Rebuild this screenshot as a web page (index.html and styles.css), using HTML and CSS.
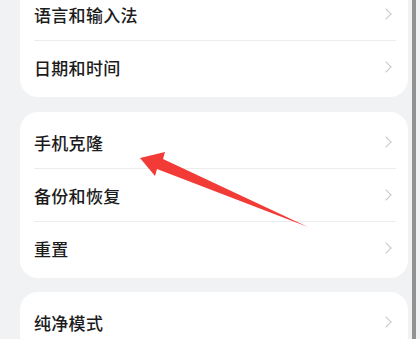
FILE: index.html
```html
<!DOCTYPE html>
<html lang="zh-CN">
<head>
    <meta charset="UTF-8">
    <meta name="viewport" content="width=device-width, initial-scale=1.0">
    <title>系统和更新</title>
    <link rel="stylesheet" href="styles.css">
</head>
<body>
    <div class="page">
        <div class="card card-first">
            <div class="row"><span class="label">语言和输入法</span><span class="chevron"></span></div>
            <div class="row"><span class="label">日期和时间</span><span class="chevron"></span></div>
        </div>

        <div class="card">
            <div class="row"><span class="label">手机克隆</span><span class="chevron"></span></div>
            <div class="row"><span class="label">备份和恢复</span><span class="chevron"></span></div>
            <div class="row"><span class="label">重置</span><span class="chevron"></span></div>
        </div>

        <div class="card">
            <div class="row"><span class="label">纯净模式</span><span class="chevron"></span></div>
        </div>
    </div>

    <!-- annotation arrow drawn over the list -->
    <svg class="arrow" width="420" height="339" viewBox="0 0 420 339">
        <polygon points="140,158 165,152 163,159 308,227 157,169 155,176" fill="#f23a36"/>
    </svg>

    <div class="scrollbar"></div>
</body>
</html>
```

FILE: styles.css
```css
* {
    margin: 0;
    padding: 0;
    box-sizing: border-box;
}

body {
    font-family: "Noto Sans CJK SC", "Noto Sans", sans-serif;
    background-color: #f1f2f4;
    width: 420px;
    height: 339px;
    overflow: hidden;
    position: relative;
}

.page {
    padding: 0 12px 0 20px;
}

.card {
    background-color: #ffffff;
    border-radius: 18px;
    padding: 4px 12px 4px 14px;
    margin-bottom: 14px;
}

.card-first {
    margin-top: -16px;
    margin-bottom: 15px;
}

.row {
    height: 53px;
    display: flex;
    align-items: center;
    justify-content: space-between;
    border-bottom: 1px solid #ececec;
}

.row:last-child {
    height: 52px;
    border-bottom: none;
}

.label {
    font-size: 17px;
    font-weight: 500;
    color: #1c1c1c;
    letter-spacing: 0.3px;
}

.chevron {
    width: 8px;
    height: 8px;
    margin-right: 6px;
    border-top: 1.5px solid #c6c6c6;
    border-right: 1.5px solid #c6c6c6;
    transform: rotate(45deg);
}

.arrow {
    position: absolute;
    top: 0;
    left: 0;
    pointer-events: none;
}

.scrollbar {
    position: absolute;
    top: 0;
    left: 412px;
    width: 4px;
    height: 339px;
    background-color: #929292;
}
```
